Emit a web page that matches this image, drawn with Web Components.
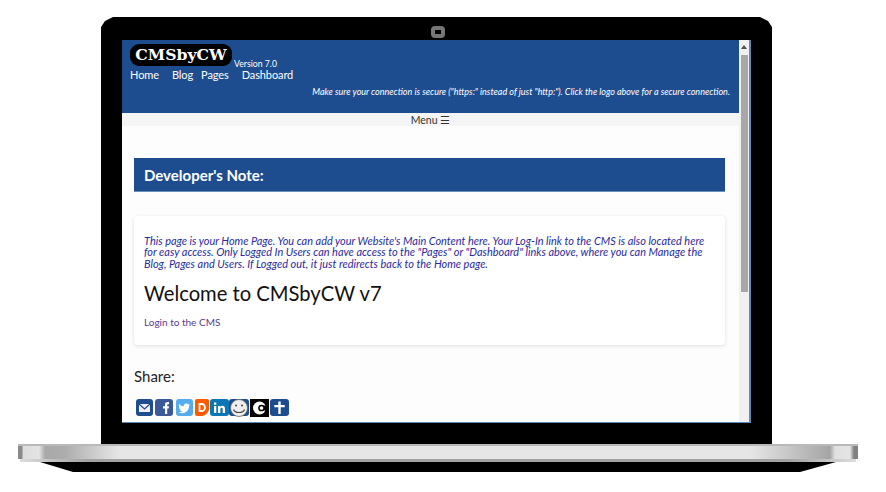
<!DOCTYPE html>
<html>
<head>
<meta charset="utf-8">
<title>CMSbyCW</title>
<style>
  html, body { margin: 0; background: #fff; overflow: hidden; }
  body { font-family: Lato, "Open Sans", sans-serif; }
</style>
</head>
<body>
<laptop-frame>
  <site-header></site-header>
  <menu-bar></menu-bar>
  <page-content>
    <note-bar>Developer's Note:</note-bar>
    <content-card>
      <em>This page is your Home Page. You can add your Website's Main Content here. Your Log-In link to the CMS is also located here for easy access. Only Logged In Users can have access to the "Pages" or "Dashboard" links above, where you can Manage the Blog, Pages and Users. If Logged out, it just redirects back to the Home page.</em>
      <h1 slot="title">Welcome to CMSbyCW v7</h1>
      <span slot="link">Login to the CMS</span>
    </content-card>
    <share-bar></share-bar>
  </page-content>
</laptop-frame>

<script>
customElements.define(
  'laptop-frame',
  class extends HTMLElement {
    constructor() {
      super();
      this.attachShadow({ mode: 'open' }).innerHTML = `
        <style>
          :host { display: flex; flex-direction: column; width: 886px; height: 492px; padding-top: 17px; box-sizing: border-box; }
          .bezel {
            align-self: flex-start;
            margin-left: 101px;
            width: 671px;
            height: 427px;
            box-sizing: border-box;
            padding: 23px 21px 21px;
            background: #000;
            position: relative;
            clip-path: polygon(12px 0, calc(100% - 12px) 0, calc(100% - 4px) 4px, 100% 10px, 100% 100%, 0 100%, 0 10px, 4px 4px);
          }
          .camera {
            position: absolute;
            left: 330px;
            top: 9px;
            width: 14px;
            height: 12px;
            border: 4px solid #767676;
            box-sizing: border-box;
            border-radius: 4px;
          }
          .screen {
            display: flex;
            height: 383px;
            background: #fff;
            border-right: 2px solid #5f87b8;
            border-bottom: 1px solid #5f87b8;
            box-sizing: border-box;
            overflow: hidden;
          }
          .view { flex: 1; min-width: 0; overflow: hidden; }
          .scroll {
            flex: none;
            width: 10px;
            background: #f1f1f1;
            display: flex;
            flex-direction: column;
            align-items: center;
          }
          .arrow { flex: none; height: 15px; width: 100%; background: #f1f1f1; position: relative; }
          .arrow::after {
            content: '';
            position: absolute;
            left: 2px;
            top: 5px;
            border: 3px solid transparent;
            border-top: 0;
            border-bottom: 4px solid #505050;
          }
          .thumb { width: 7px; height: 237px; background: #a8a8a8; }
          .base {
            margin-left: 18px;
            width: 840px;
            height: 15px;
            background: linear-gradient(90deg, #8a8a8a 0, #8a8a8a 4px, #dcdcdc 5px, #e4e4e4 21px, #a9a9a9 27px, #acacac 46px, #d0d0d0 80px, #e6e6e6 102px, #e6e6e6 732px, #d0d0d0 760px, #a5a5a5 812px, #e0e0e0 817px, #e4e4e4 832px, #808080 836px);
            border-top: 2px solid #b9b9b9;
            box-sizing: border-box;
          }
          .lip {
            margin-left: 20px;
            width: 836px;
            height: 3px;
            background: linear-gradient(90deg, #ddd, #a2a2a2 8%, #a2a2a2 92%, #ddd);
          }
          .foot {
            margin-left: 40px;
            width: 796px;
            height: 10px;
            background: #000;
            clip-path: polygon(0 0, 100% 0, 760px 100%, 33px 100%);
          }
        </style>
        <div class="bezel">
          <div class="camera"></div>
          <div class="screen">
            <div class="view"><slot></slot></div>
            <div class="scroll"><div class="arrow"></div><div class="thumb"></div></div>
          </div>
        </div>
        <div class="base"></div>
        <div class="lip"></div>
        <div class="foot"></div>
      `;
    }
  }
);

customElements.define(
  'site-header',
  class extends HTMLElement {
    constructor() {
      super();
      this.attachShadow({ mode: 'open' }).innerHTML = `
        <style>
          :host { display: block; height: 73px; background: #1e4d8f; color: #fff; padding: 4px 8px 0; box-sizing: border-box; }
          .brand { display: flex; align-items: flex-end; gap: 2px; }
          .logo {
            background: #000;
            width: 102px;
            height: 22px;
            border-radius: 9px;
            font: bold 15.7px/21px "DejaVu Serif", serif;
            text-align: center;
          }
          .version { font-size: 8.7px; line-height: 9px; margin-bottom: -2px; }
          nav { display: flex; font-size: 11px; letter-spacing: -.1px; line-height: 14px; margin-top: 2px; }
          nav span:nth-child(1) { margin-right: 13px; }
          nav span:nth-child(2) { margin-right: 8px; }
          nav span:nth-child(3) { margin-right: 13px; }
          .notice { font-size: 9px; font-style: italic; line-height: 10px; text-align: right; margin-top: 5px; padding-right: 1px; white-space: nowrap; }
        </style>
        <div class="brand"><div class="logo">CMSbyCW</div><div class="version">Version 7.0</div></div>
        <nav><span>Home</span><span>Blog</span><span>Pages</span><span>Dashboard</span></nav>
        <div class="notice">Make sure your connection is secure ("https:" instead of just "http:"). Click the logo above for a secure connection.</div>
      `;
    }
  }
);

customElements.define(
  'menu-bar',
  class extends HTMLElement {
    constructor() {
      super();
      this.attachShadow({ mode: 'open' }).innerHTML = `
        <style>
          :host { display: block; height: 13px; background: #f5f5f5; color: #333; font-size: 10.5px; line-height: 14px; text-align: center; }
        </style>
        Menu &#9776;
      `;
    }
  }
);

customElements.define(
  'page-content',
  class extends HTMLElement {
    constructor() {
      super();
      this.attachShadow({ mode: 'open' }).innerHTML = `
        <style>
          :host { display: flex; flex-direction: column; background: #fdfdfd; padding: 32px 14px 0 12px; }
        </style>
        <slot></slot>
      `;
    }
  }
);

customElements.define(
  'note-bar',
  class extends HTMLElement {
    constructor() {
      super();
      this.attachShadow({ mode: 'open' }).innerHTML = `
        <style>
          :host { display: block; height: 34px; box-sizing: border-box; background: #1e4d8f; border-bottom: 1px solid #6b8fbb; color: #fff; font-size: 15px; font-weight: 700; line-height: 34px; padding-left: 10px; }
        </style>
        <slot></slot>
      `;
    }
  }
);

customElements.define(
  'content-card',
  class extends HTMLElement {
    constructor() {
      super();
      this.attachShadow({ mode: 'open' }).innerHTML = `
        <style>
          :host { display: block; height: 129px; margin-top: 24px; box-sizing: border-box; background: #fff; border-radius: 4px; box-shadow: 0 1px 4px rgba(0, 0, 0, .12); padding: 19px 10px 0; }
          .note { color: #2a2a9c; font-size: 10.95px; line-height: 11.4px; }
          ::slotted(h1) { margin: 11px 0 0; color: #111; font-size: 20.2px; font-weight: 400; line-height: 26px; }
          .link { color: #5b3a90; font-size: 10px; line-height: 12px; margin-top: 10px; }
        </style>
        <div class="note"><slot></slot></div>
        <slot name="title"></slot>
        <div class="link"><slot name="link"></slot></div>
      `;
    }
  }
);

customElements.define(
  'share-bar',
  class extends HTMLElement {
    constructor() {
      super();
      this.attachShadow({ mode: 'open' }).innerHTML = `
        <style>
          :host { display: block; margin-top: 22px; color: #222; }
          .label { font-size: 15px; line-height: 18px; }
          .icons { display: flex; align-items: flex-start; margin: 14px 0 0 2px; }
          svg { display: block; flex: none; }
        </style>
        <div class="label">Share:</div>
        <div class="icons">
          <svg width="19" height="18" viewBox="0 0 19 18"><rect width="17" height="17" rx="3" fill="#1e4d8f"/><path d="M3 5h11v8H3z" fill="#f3eef5"/><path d="M3 5l5.500 5L14 5" fill="none" stroke="#1e4d8f" stroke-width="1.200"/></svg>
          <svg width="21" height="18" viewBox="0 0 21 18"><rect width="18" height="17" rx="3" fill="#3b5998"/><path d="M10 15V9.500H8V7.200h2V5.600C10 3.800 11 3 12.500 3H14v2.200h-1c-.6 0-.8.300-.8.800v1.200H14l-.3 2.300h-1.500V15z" fill="#fff"/></svg>
          <svg width="19" height="18" viewBox="0 0 19 18"><rect width="17" height="17" rx="3" fill="#55acee"/><path d="M14 5.500c-.5.200-1 .4-1.500.4.500-.3 1-.8 1.100-1.300-.5.300-1 .5-1.600.6A2.500 2.500 0 0 0 7.700 7.500 7 7 0 0 1 3.200 5c-.7 1.200-.3 2.600.8 3.300-.4 0-.8-.1-1.100-.3 0 1.200.8 2.200 2 2.500-.4.100-.8.100-1.100 0 .3 1 1.200 1.700 2.300 1.700A5 5 0 0 1 2.500 13.300 7 7 0 0 0 13 7c.4-.4.800-.9 1-1.500z" fill="#fff"/></svg>
          <svg width="15" height="18" viewBox="0 0 15 18"><path d="M2 0h10a2 2 0 0 1 2 2v8c0 3-4 7-7 7H2a2 2 0 0 1-2-2V2a2 2 0 0 1 2-2z" fill="#ff5a00"/><path d="M4.500 5h2.500A3 3.500 0 0 1 7 12H4.500z" fill="none" stroke="#fff" stroke-width="1.800"/></svg>
          <svg width="19" height="18" viewBox="0 0 19 18"><rect width="19" height="17" rx="3" fill="#0a77b5"/><path d="M4 7h2.300v7H4zM4 3.500h2.300v2.200H4zM8 7h2.200v1c.5-.8 1.300-1.200 2.200-1.200 1.800 0 2.600 1.200 2.600 3V14h-2.300v-3.700c0-1-.3-1.500-1.100-1.500s-1.300.6-1.300 1.500V14H8z" fill="#fff"/></svg>
          <svg width="21" height="18" viewBox="0 0 21 18"><rect width="20" height="17" rx="3" fill="#1e4d8f"/><circle cx="10" cy="9" r="8.500" fill="#eee" stroke="#666" stroke-width=".8"/><circle cx="7" cy="6.500" r="1" fill="#444"/><circle cx="13" cy="6.500" r="1" fill="#444"/><path d="M4.500 10.500c1.500 4 9.500 4 11 0" fill="none" stroke="#444" stroke-width="1.200"/></svg>
          <svg width="20" height="18" viewBox="0 0 20 18"><rect width="19" height="18" fill="#000"/><circle cx="9.500" cy="9" r="6.500" fill="#fff"/><circle cx="11.500" cy="9" r="2.600" fill="none" stroke="#000" stroke-width="1.500"/><path d="M14 6.500h3v5h-3z" fill="#000"/></svg>
          <svg width="19" height="18" viewBox="0 0 19 18"><rect width="19" height="17" rx="3" fill="#1e4d8f"/><path d="M8.300 2.500h2.400V6h4v2.300h-4V15H8.300V8.300h-4V6h4z" fill="#fff"/></svg>
        </div>
      `;
    }
  }
);
</script>
</body>
</html>
